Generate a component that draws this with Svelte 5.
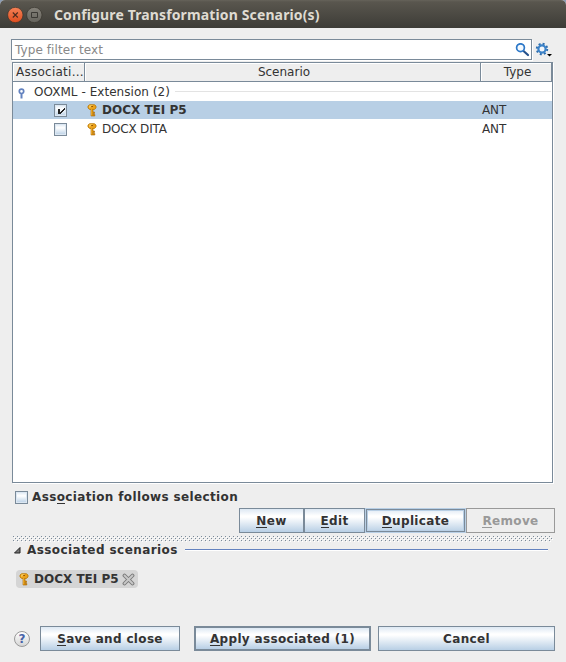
<script>
  const scenarios = [
    { name: 'DOCX TEI P5', type: 'ANT', selected: true },
    { name: 'DOCX DITA', type: 'ANT', selected: false }
  ];
</script>

{#snippet key()}
  <svg class="key" width="10" height="13" viewBox="0 0 10 13">
    <path d="M4 5h2v3h1.500v1.500H6v1h1.800V12H4z" fill="#d58a05" stroke="#a86703" stroke-width=".6" />
    <path d="M2.600.700h4.800L9 2v2L7.300 5.500H2.700L1 4V2z" fill="#eba11a" stroke="#b97808" stroke-width=".8" />
    <path d="M2.500 2h3M2 3h1.500" stroke="#ffdc78" fill="none" />
    <path d="M4.200 2.500h1.800" stroke="#945600" fill="none" />
    <path d="M4.700 5v6.500" stroke="#f5bd45" stroke-width=".8" fill="none" />
  </svg>
{/snippet}

<div class="window">
  <header>
    <svg width="36" height="16" viewBox="0 0 36 16">
      <defs>
        <linearGradient id="close" x2="0" y2="1"><stop stop-color="#f58257" /><stop offset="1" stop-color="#df4d1e" /></linearGradient>
        <linearGradient id="max" x2="0" y2="1"><stop stop-color="#85827a" /><stop offset="1" stop-color="#65635c" /></linearGradient>
      </defs>
      <circle cx="8.300" cy="8" r="7.700" fill="url(#close)" stroke="#36332d" stroke-width=".7" />
      <path d="M5.800 5.500l5 5m0-5l-5 5" stroke="#4c2b1e" stroke-width="1.100" />
      <circle cx="27.300" cy="8" r="7.700" fill="url(#max)" stroke="#36332d" stroke-width=".7" />
      <path d="M24.500 5.500h6v5h-6z" fill="none" stroke="#3b3934" />
    </svg>
    <span class="title">Configure Transformation Scenario(s)</span>
  </header>

  <div class="filter">
    <div class="input">
      <span>Type filter text</span>
      <svg width="15" height="15" viewBox="0 0 15 15">
        <path d="M8.500 8l4.500 4" stroke="#25518b" stroke-width="2.200" stroke-linecap="round" />
        <circle cx="5.500" cy="4.700" r="3.900" fill="#f4faff" stroke="#2d78c8" stroke-width="1.700" />
      </svg>
    </div>
    <svg class="gear" width="18" height="16" viewBox="0 0 18 16">
      <circle cx="7" cy="7" r="5.200" fill="none" stroke="#2e6eaf" stroke-width="2" stroke-dasharray="2 2.084" />
      <circle cx="7" cy="7" r="3.600" fill="#f2f6fa" stroke="#3b82c8" stroke-width="2.200" />
      <path d="M12 12h5l-2.500 2.500z" fill="#000" />
    </svg>
  </div>

  <div class="table">
    <div class="head">
      <div class="c1">Associati...</div>
      <div class="c2">Scenario</div>
      <div class="c3">Type</div>
    </div>
    <div class="group">
      <svg width="7" height="11" viewBox="0 0 7 11">
        <path d="M3.500 5v5.500" stroke="#6382bf" stroke-width="2" />
        <circle cx="3.500" cy="3.300" r="2.200" fill="#fff" stroke="#6382bf" stroke-width="1.700" />
      </svg>
      <span>OOXML - Extension (2)</span><i></i>
    </div>
    {#each scenarios as row}
      <div class="row" class:selected={row.selected}>
        <div class="check">
          {#if row.selected}
            <svg width="11" height="11" viewBox="0 0 11 11" shape-rendering="crispEdges"><path d="M3 4h2v3h1V6h1V5h1V4h1V3h1v2H9v1H8v1H7v1H6v1H3z" fill="#222" /></svg>
          {/if}
        </div>
        {@render key()}
        <span class="name">{row.name}</span>
        <span class="type">{row.type}</span>
      </div>
    {/each}
  </div>

  <div class="follow"><div class="check"></div><span>Ass<u>o</u>ciation follows selection</span></div>

  <div class="actions">
    <button class="new"><span><u>N</u>ew</span></button>
    <button class="edit"><span><u>E</u>dit</span></button>
    <button class="duplicate"><span><u>D</u>uplicate</span></button>
    <button class="remove" disabled><span><u>R</u>emove</span></button>
  </div>

  <svg class="splitter" width="540" height="8">
    <defs>
      <pattern id="dots" width="4" height="4" patternUnits="userSpaceOnUse">
        <path d="M1 1h1v1H1zM3 3h1v1H3z" fill="#fff" />
        <path d="M0 0h1v1H0zM2 2h1v1H2z" fill="#7a8a99" />
      </pattern>
    </defs>
    <rect width="540" height="6" fill="url(#dots)" shape-rendering="crispEdges" />
  </svg>

  <div class="section">
    <svg width="7" height="7" viewBox="0 0 7 7"><path d="M6 .5V6H.5z" fill="#777" stroke="#222" /></svg>
    <span>Associated scenarios</span><i></i>
  </div>

  <div class="chip">
    {@render key()}
    <span>DOCX TEI P5</span>
    <svg width="13" height="13" viewBox="0 0 13 13">
      <path d="M2.500 2.500l8 8m0-8l-8 8" stroke="#777" stroke-width="3.800" stroke-linecap="round" />
      <path d="M2.500 2.500l8 8m0-8l-8 8" stroke="#c8c8c8" stroke-width="1.900" stroke-linecap="round" />
    </svg>
  </div>

  <footer>
    <div class="help">?</div>
    <button class="save"><span><u>S</u>ave and close</span></button>
    <button class="apply"><span><u>A</u>pply associated (1)</span></button>
    <button class="cancel"><span>Cancel</span></button>
  </footer>
</div>

<style>
  .window {
    width: 566px; height: 662px; box-sizing: border-box; overflow: hidden;
    display: flex; flex-direction: column; background: #eee; color: #333;
    font: 12px/18px "DejaVu Sans", sans-serif;
  }
  .window * { box-sizing: border-box; }
  svg { display: block; flex: none; }
  span { white-space: nowrap; }
  u { text-decoration: none; background: linear-gradient(currentColor, currentColor) 0 100% / 100% 1px no-repeat; display: inline-block; height: 14px; line-height: 14px; }
  header {
    height: 28px; flex: none; display: flex; align-items: center; padding: 1px 0 0 7px;
    background: linear-gradient(#66635a 0, #59564e 2px, #3d3c37 28px);
    border-radius: 5px 5px 0 0; box-shadow: 0 -6px 0 6px #8c9db5;
    clip-path: inset(0);
  }
  .title {
    margin-left: 11px; color: #dfdbd2; font: bold 14px/20px "Noto Sans", sans-serif;
    letter-spacing: .13px;
  }
  .filter { display: flex; margin: 11px 0 0 11px; height: 22px; flex: none; }
  .input {
    width: 521px; height: 21px; background: #fff; border: 1px solid #7a8a99;
    display: flex; justify-content: space-between; padding: 3px 1px 0 3px;
    color: #888; line-height: 14px; box-shadow: 1px 1px #fff;
  }
  .input span { letter-spacing: .08px; }
  .gear { margin: 3px 0 0 3px; }
  .table {
    width: 541px; height: 421px; margin: 1px 0 0 12px; flex: none;
    background: #fff; border: 1px solid #7a8a99; box-shadow: 1px 1px #fff;
  }
  .head { display: flex; height: 19px; line-height: 19px; background: #eee; text-align: center; }
  .head div { border-right: 1px solid #7a8a99; border-bottom: 1px solid #7a8a99; box-shadow: inset 1px 1px #fff; }
  .head .c1 { width: 72px; text-align: left; padding-left: 3px; letter-spacing: .25px; }
  .head .c2 { width: 396px; padding-left: 3px; }
  .head .c3 { width: 71px; padding-left: 3px; }
  .group { display: flex; align-items: center; height: 19px; padding: 0 1px 0 5px; }
  .group svg { margin-top: 3px; }
  .group span { margin-left: 9px; letter-spacing: .04px; }
  .group i { height: 1px; background: #e3e3e3; flex: 1; margin: -1px 0 0 5px; }
  .row { height: 18px; margin-bottom: 1px; display: flex; align-items: center; padding-left: 41px; }
  .name { letter-spacing: -.2px; width: 380px; margin-left: 5px; }
  .type { letter-spacing: -.15px; }
  .selected { background: #b8cfe5; }
  .selected .name { font-weight: bold; letter-spacing: 0; }
  .check {
    width: 13px; height: 13px; flex: none; border: 1px solid #7a8a99;
    background: linear-gradient(#dde8f3, #fff 35%, #b8cfe5);
    box-shadow: inset 0 0 0 1px #dce7f2;
  }
  .row .key { margin-left: 20px; }
  .follow { display: flex; align-items: center; height: 18px; margin: 5px 0 0 15px; flex: none; font-weight: bold; letter-spacing: .36px; }
  .follow span { margin-left: 4px; }
  .actions { display: flex; margin: 2px 0 0 239px; height: 25px; flex: none; }
  button {
    font: bold 12px/18px "DejaVu Sans", sans-serif; letter-spacing: .33px;
    padding: 0; border: 1px solid #7a8a99; border-radius: 0; height: 25px; color: #333;
    background: linear-gradient(#dde8f3, #fff 30%, #fff 35%, #b8cfe5);
  }
  .new { width: 65px; }
  .edit { width: 61px; }
  .duplicate { width: 101px; border: 1px solid #b8cfe5; box-shadow: inset 0 0 0 1px #7a8a99, inset 0 0 0 2px #b8cfe5; }
  .remove { width: 89px; color: #999; border-color: #999; background: #eee; }
  .splitter { margin: 3px 0 0 13px; }
  .section { display: flex; align-items: center; height: 14px; margin: -1px 18px 0 14px; flex: none; font-weight: bold; letter-spacing: .43px; }
  .section span { margin-left: 6px; }
  .section i { flex: 1; height: 2px; margin-left: 7px; background: #6382bf; border-bottom: 1px solid #fff; }
  .chip {
    width: 122px; height: 18px; margin: 13px 0 0 16px; padding-left: 3px; flex: none;
    display: flex; align-items: center; border-radius: 4px; background: #d5d5d5; font-weight: bold;
  }
  .chip span { margin: 0 3px 0 5px; }
  footer { display: flex; margin: 38px 0 0 14px; height: 25px; align-items: center; }
  .help {
    width: 16px; height: 16px; border-radius: 50%; border: 1px solid #999; flex: none;
    background: linear-gradient(#fff, #d5d5d5); color: #4763a8; font: bold 12px/14px "DejaVu Sans", sans-serif; text-align: center;
  }
  .save { width: 140px; margin-left: 10px; }
  .apply { width: 177px; margin-left: 14px; border-width: 2px; }
  .cancel { width: 177px; margin-left: 7px; }
</style>
